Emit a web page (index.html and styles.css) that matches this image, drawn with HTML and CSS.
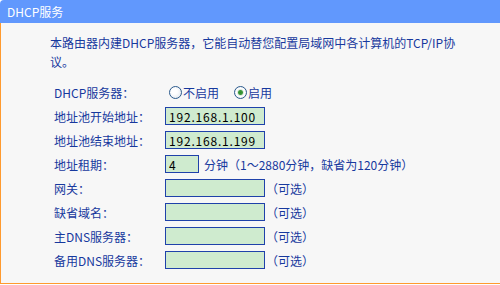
FILE: index.html
```html
<!DOCTYPE html>
<html lang="zh-CN">
<head>
  <meta charset="UTF-8" />
  <title>DHCP服务</title>
  <link rel="stylesheet" href="styles.css">
</head>
<body>

  <div class="panel">
    <div class="panel-title">DHCP服务</div>

    <div class="panel-body">
      <p class="intro">本路由器内建DHCP服务器，它能自动替您配置局域网中各计算机的TCP/IP协议。</p>

      <!-- 设置项 -->
      <div class="form">
        <div class="label">DHCP服务器：</div>
        <div class="field">
          <label class="radio"><input type="radio" name="dhcp" value="0" />不启用</label>
          <label class="radio"><input type="radio" name="dhcp" value="1" checked />启用</label>
        </div>

        <div class="label">地址池开始地址：</div>
        <div class="field"><input type="text" class="text" value="192.168.1.100" /></div>

        <div class="label">地址池结束地址：</div>
        <div class="field"><input type="text" class="text" value="192.168.1.199" /></div>

        <div class="label">地址租期：</div>
        <div class="field"><input type="text" class="text short" value="4" /><span class="hint">分钟（1～2880分钟，缺省为120分钟）</span></div>

        <div class="label">网关：</div>
        <div class="field"><input type="text" class="text" /><span class="opt">（可选）</span></div>

        <div class="label">缺省域名：</div>
        <div class="field"><input type="text" class="text" /><span class="opt">（可选）</span></div>

        <div class="label">主DNS服务器：</div>
        <div class="field"><input type="text" class="text" /><span class="opt">（可选）</span></div>

        <div class="label">备用DNS服务器：</div>
        <div class="field"><input type="text" class="text" /><span class="opt">（可选）</span></div>
      </div>
    </div>
  </div>

</body>
</html>
```

FILE: styles.css
```css
body {
  margin: 0;
  background-color: #fff;
  font-family: "Noto Sans CJK SC", sans-serif;
  font-size: 12px;
  color: #17399e;
}
.panel {
  width: 500px;
}
.panel-title {
  height: 23px;
  line-height: 23px;
  padding-left: 7px;
  background-color: #6198fd;
  border-top-left-radius: 4px;
  color: #fff;
}
.panel-body {
  background-color: #f7f7f7;
  border-left: 1px solid #ff9a2e;
  border-bottom: 1px solid #ff9a2e;
  padding: 10px 0 11px 49px;
}
.intro {
  margin: 0 0 9px 0;
  width: 412px;
  line-height: 19px;
}
/* 表单 */
.form {
  display: grid;
  grid-template-columns: 111px 1fr;
  grid-auto-rows: 24px;
  align-items: center;
  margin-left: 4px;
}
.field {
  display: flex;
  align-items: center;
}
.text {
  box-sizing: border-box;
  width: 100px;
  height: 18px;
  margin: 0;
  padding: 0 3px;
  border: 1px solid #1f42aa;
  background-color: #cfebcf;
  font-family: "Noto Sans CJK SC", sans-serif;
  font-size: 12px;
  letter-spacing: 0.8px;
  color: #000;
  outline: none;
}
.text.short {
  width: 34px;
}
.hint {
  margin-left: 5px;
}
.opt {
  margin-left: 1px;
}
/* 单选框 */
.radio {
  display: flex;
  align-items: center;
  margin-right: 11px;
  cursor: pointer;
}
.radio input {
  appearance: none;
  -webkit-appearance: none;
  width: 13px;
  height: 13px;
  margin: 0 1px 0 4px;
  border: 1px solid #2b5a8c;
  border-radius: 50%;
  background: radial-gradient(circle at 40% 40%, #fff 30%, #d9e1ea 100%);
}
.radio input:checked {
  background: radial-gradient(circle, #2f8a2f 0, #3c9a3c 2px, #dfe9df 3px, #fff 4px, #d9e1ea 100%);
}
```
